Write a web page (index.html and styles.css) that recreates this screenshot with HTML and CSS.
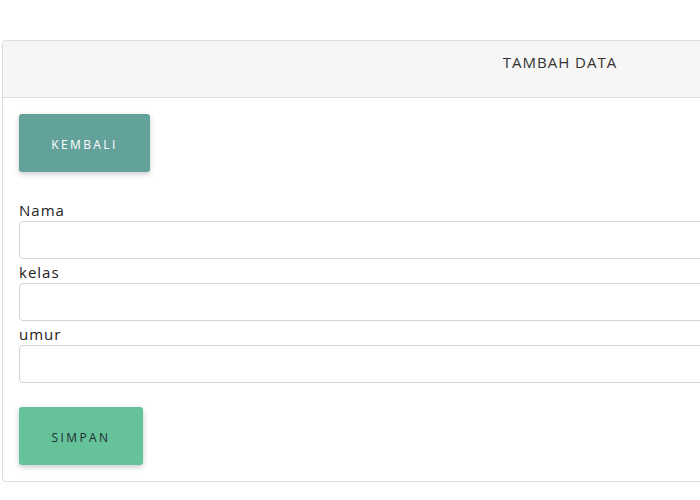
FILE: index.html
```html
<!DOCTYPE html>
<html lang="id">
<head>
<meta charset="utf-8">
<title>Tambah Data</title>
<link rel="stylesheet" href="styles.css">
</head>
<body>
<div class="card">
  <div class="card-header">TAMBAH DATA</div>
  <div class="card-body">
    <button class="btn btn-back" type="button">KEMBALI</button>
    <form class="form">
      <div class="field">
        <label class="label" for="nama">Nama</label>
        <input class="input" id="nama" type="text">
      </div>
      <div class="field">
        <label class="label" for="kelas">kelas</label>
        <input class="input" id="kelas" type="text">
      </div>
      <div class="field">
        <label class="label" for="umur">umur</label>
        <input class="input" id="umur" type="text">
      </div>
      <button class="btn btn-save" type="button">SIMPAN</button>
    </form>
  </div>
</div>
</body>
</html>
```
FILE: styles.css
```css
html {
  overflow: hidden;
}
body {
  margin: 0;
  padding: 40px 0 0 2px;
  background: #fff;
  font-family: "Open Sans", "Noto Sans", sans-serif;
  color: #212529;
}
.card {
  width: 1114px;
  border: 1px solid #dcdcdc;
  border-radius: 4px;
  background: #fff;
}
.card-header {
  background: #f6f6f6;
  border-bottom: 1px solid #dcdcdc;
  border-radius: 4px 4px 0 0;
  height: 57px;
  box-sizing: border-box;
  padding-top: 11px;
  text-align: center;
  font-size: 15px;
  line-height: 20px;
  letter-spacing: 1px;
  color: #333;
}
.card-body {
  padding: 16px;
}
.btn {
  display: block;
  border: none;
  border-radius: 3px;
  height: 58px;
  padding: 2px 0 0;
  font-family: "Open Sans", "Noto Sans", sans-serif;
  font-size: 12px;
  letter-spacing: 2.4px;
  box-shadow: 0 2px 5px rgba(0, 0, 0, 0.16), 0 2px 8px rgba(0, 0, 0, 0.06);
  cursor: pointer;
}
.btn-back {
  width: 131px;
  background: #63a19b;
  color: #fff;
}
.btn-save {
  width: 124px;
  margin-top: 24px;
  background: #66c299;
  color: #1d2d33;
}
.form {
  margin-top: 27px;
}
.field {
  margin-bottom: 2px;
}
.label {
  display: block;
  font-size: 15px;
  line-height: 22px;
  letter-spacing: 1px;
  color: #222;
}
.input {
  display: block;
  box-sizing: border-box;
  width: 100%;
  height: 38px;
  border: 1px solid #ced4da;
  border-radius: 4px;
  background: #fff;
  margin: 0;
  padding: 6px 12px;
  font-size: 15px;
}
```
